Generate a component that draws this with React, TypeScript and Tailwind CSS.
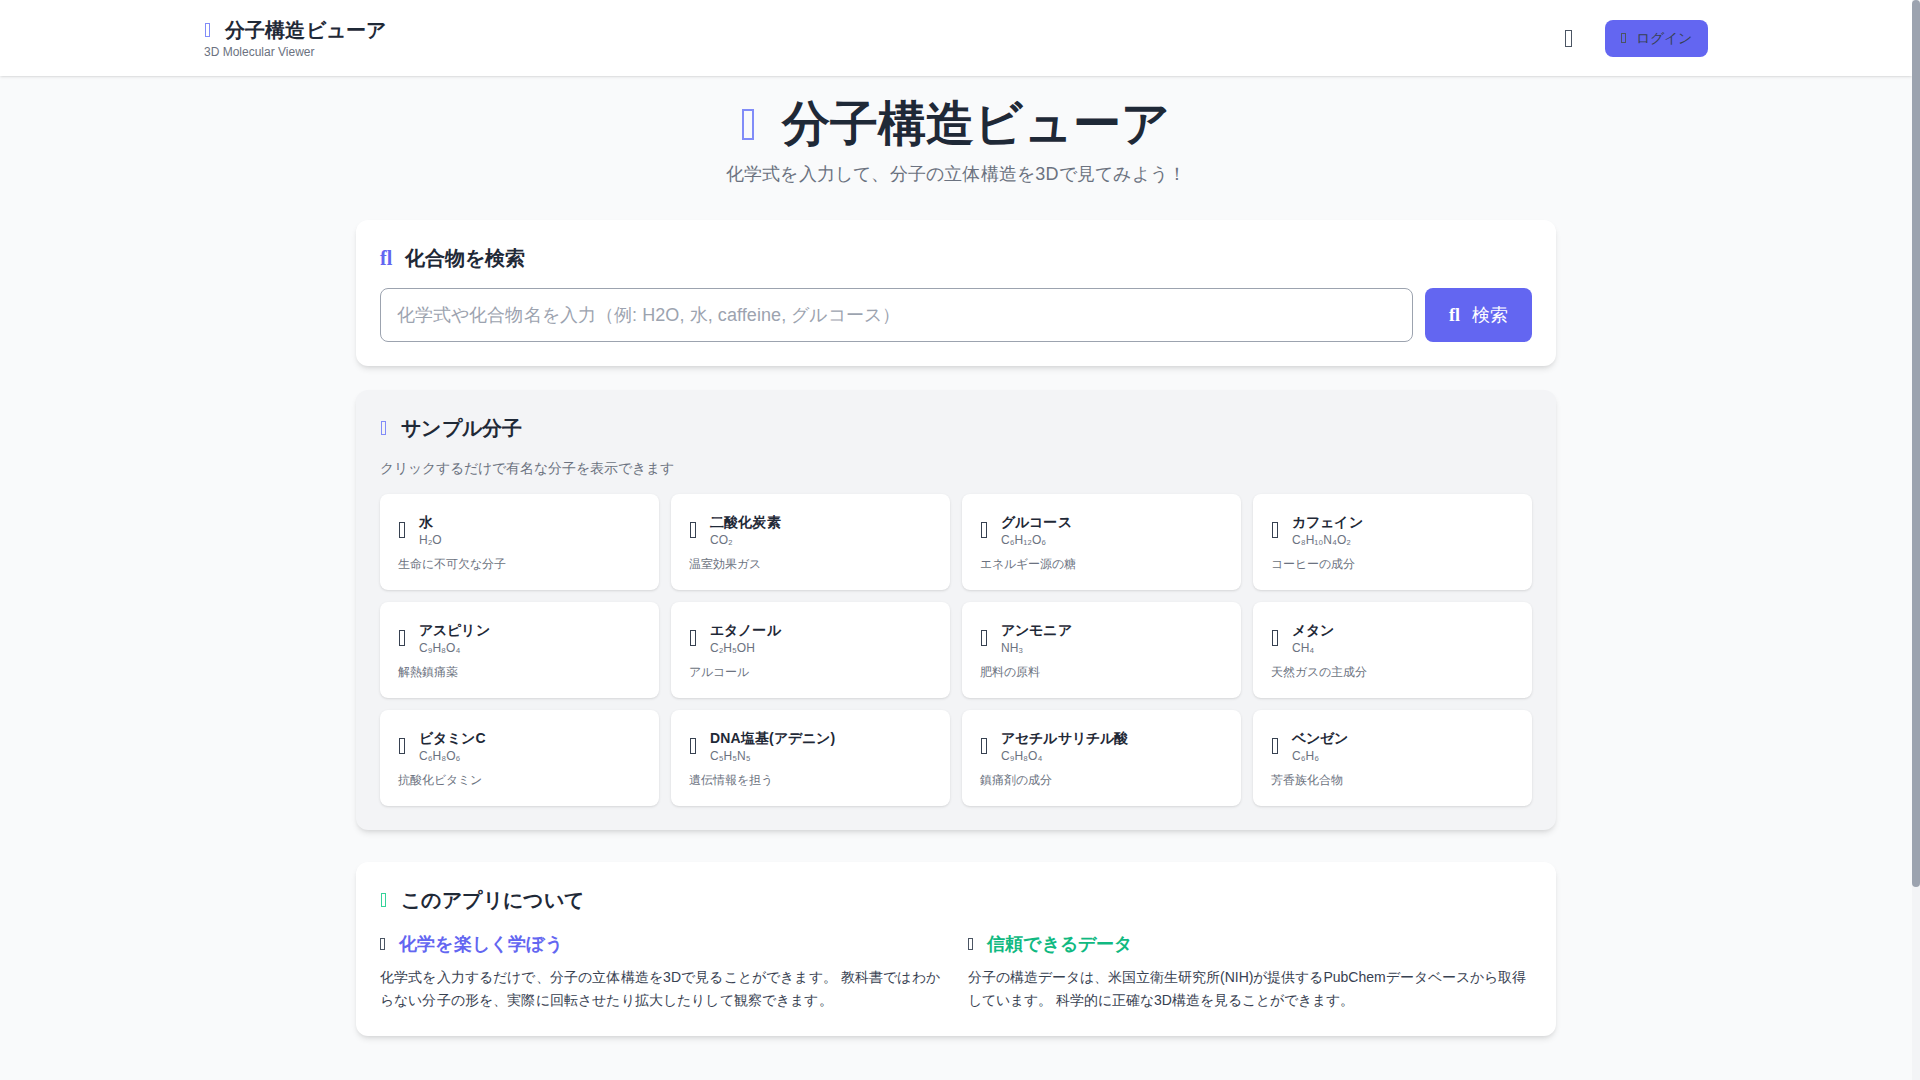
import React from 'react';

const SAMPLES = [
  { name: '水', formula: 'H₂O', desc: '生命に不可欠な分子' },
  { name: '二酸化炭素', formula: 'CO₂', desc: '温室効果ガス' },
  { name: 'グルコース', formula: 'C₆H₁₂O₆', desc: 'エネルギー源の糖' },
  { name: 'カフェイン', formula: 'C₈H₁₀N₄O₂', desc: 'コーヒーの成分' },
  { name: 'アスピリン', formula: 'C₉H₈O₄', desc: '解熱鎮痛薬' },
  { name: 'エタノール', formula: 'C₂H₅OH', desc: 'アルコール' },
  { name: 'アンモニア', formula: 'NH₃', desc: '肥料の原料' },
  { name: 'メタン', formula: 'CH₄', desc: '天然ガスの主成分' },
  { name: 'ビタミンC', formula: 'C₆H₈O₆', desc: '抗酸化ビタミン' },
  { name: 'DNA塩基(アデニン)', formula: 'C₅H₅N₅', desc: '遺伝情報を担う' },
  { name: 'アセチルサリチル酸', formula: 'C₉H₈O₄', desc: '鎮痛剤の成分' },
  { name: 'ベンゼン', formula: 'C₆H₆', desc: '芳香族化合物' },
];

// missing-glyph boxes: the icon font never loaded in the original
const Tofu = ({ className = '' }: { className?: string }) => (
  <span className={`inline-block shrink-0 border border-current ${className}`} />
);

const Fl = ({ className = '' }: { className?: string }) => (
  <span className={`inline-block leading-none font-bold [font-family:'Liberation_Serif',serif] ${className}`}>fl</span>
);

function App() {
  return (
    <div lang="ja" className="flex h-screen overflow-hidden bg-[#f9fafb] text-[#1f2937] [font-family:'Liberation_Sans',sans-serif]">
      <div className="min-w-0 flex-1">
        <header className="bg-white shadow-sm">
          <div className="mx-auto flex h-[76px] max-w-[1536px] items-center justify-between px-4">
            <div>
              <div className="flex items-center text-xl font-bold tracking-[0.15px]">
                <Tofu className="mr-[15px] ml-px h-[14px] w-[5px] text-[#818cf8]" />
                <span>分子構造ビューア</span>
              </div>
              <p className="text-xs text-[#6b7280]">3D Molecular Viewer</p>
            </div>
            <div className="flex items-center gap-[33px]">
              <Tofu className="h-[17px] w-[7px] text-[#4b5563]" />
              <button className="flex h-[37px] items-center rounded-lg bg-[#6366f1] px-4 text-sm text-[#374151]">
                <Tofu className="mr-[10px] h-[10px] w-[5px] text-[#4b5563]" />
                <span>ログイン</span>
              </button>
            </div>
          </div>
        </header>

        <main className="mx-auto max-w-[1200px] pt-6">
          <div className="mb-8 text-center">
            <h1 className="mb-3 flex items-center justify-center text-5xl font-bold tracking-[0.2px]">
              <Tofu className="mr-7 h-[31px] w-[12px] border-2 text-[#818cf8]" />
              分子構造ビューア
            </h1>
            <p className="text-lg tracking-[0.2px] text-[#6b7280]">化学式を入力して、分子の立体構造を3Dで見てみよう！</p>
          </div>

          <section className="mb-6 rounded-xl bg-white p-6 shadow-md">
            <h2 className="mb-4 flex items-center text-xl font-bold">
              <Fl className="mr-[13px] text-[#6366f1]" />
              化合物を検索
            </h2>
            <div className="flex gap-3">
              <input
                type="text"
                placeholder="化学式や化合物名を入力（例: H2O, 水, caffeine, グルコース）"
                className="h-[54px] flex-1 rounded-lg border border-[#9ca3af] px-4 text-lg tracking-[0.08px] placeholder:text-[#9ca3af]"
              />
              <button className="flex h-[54px] w-[107px] items-center justify-center rounded-lg bg-[#6366f1] text-lg text-white">
                <Fl className="mr-3" />
                検索
              </button>
            </div>
          </section>

          <section className="mb-8 rounded-xl bg-[#f3f4f6] p-6 shadow-md">
            <h2 className="mb-4 flex items-center text-xl font-bold tracking-[0.3px]">
              <Tofu className="mr-[15px] ml-px h-[14px] w-[5px] text-[#818cf8]" />
              サンプル分子
            </h2>
            <p className="mb-4 text-sm text-[#6b7280]">クリックするだけで有名な分子を表示できます</p>
            <div className="grid grid-cols-4 gap-3">
              {SAMPLES.map((s) => (
                <div key={s.name} className="h-24 rounded-lg border-2 border-transparent bg-white p-4 shadow-sm">
                  <div className="flex items-center">
                    <Tofu className="mr-[14px] ml-px h-[16px] w-[6px] text-[#374151]" />
                    <div>
                      <div className="text-sm font-bold tracking-[0.15px]">{s.name}</div>
                      <div className="text-xs text-[#6b7280]">{s.formula}</div>
                    </div>
                  </div>
                  <p className="mt-2 text-xs text-[#6b7280]">{s.desc}</p>
                </div>
              ))}
            </div>
          </section>

          <section className="mb-[279px] rounded-xl bg-white p-6 shadow-md">
            <h2 className="mb-4 flex items-center text-xl font-bold tracking-[0.4px]">
              <Tofu className="mr-[15px] ml-px h-[14px] w-[5px] text-[#34d399]" />
              このアプリについて
            </h2>
            <div className="grid grid-cols-2 gap-6">
              <div>
                <h3 className="mb-2 flex items-center text-lg font-bold tracking-[0.2px] text-[#6366f1]">
                  <Tofu className="mr-[14px] h-[12px] w-[5px] text-[#4b5563]" />
                  化学を楽しく学ぼう
                </h3>
                <p className="text-sm leading-relaxed tracking-[0.15px] text-[#374151]">
                  化学式を入力するだけで、分子の立体構造を3Dで見ることができます。 教科書ではわからない分子の形を、実際に回転させたり拡大したりして観察できます。
                </p>
              </div>
              <div>
                <h3 className="mb-2 flex items-center text-lg font-bold tracking-[0.2px] text-[#10b981]">
                  <Tofu className="mr-[14px] h-[12px] w-[5px] text-[#4b5563]" />
                  信頼できるデータ
                </h3>
                <p className="text-sm leading-relaxed text-[#374151]">
                  分子の構造データは、米国立衛生研究所(NIH)が提供するPubChemデータベースから取得しています。 科学的に正確な3D構造を見ることができます。
                </p>
              </div>
            </div>
          </section>
        </main>
      </div>

      {/* scrollbar as it appears in the picture */}
      <div className="w-2 shrink-0 bg-[#f3f4f6]">
        <div className="h-[887px] rounded bg-[#9ca3af]" />
      </div>
    </div>
  );
}

export default App;
